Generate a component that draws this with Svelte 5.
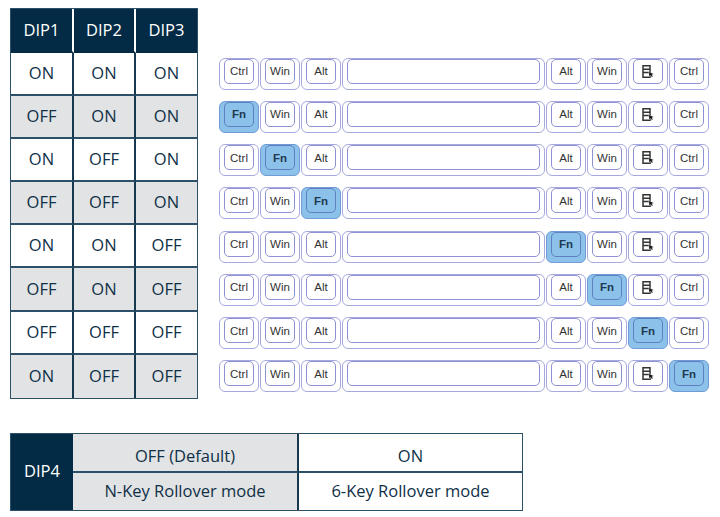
<script>
	const rows = [
		['ON', 'ON', 'ON', -1],
		['OFF', 'ON', 'ON', 0],
		['ON', 'OFF', 'ON', 1],
		['OFF', 'OFF', 'ON', 2],
		['ON', 'ON', 'OFF', 4],
		['OFF', 'ON', 'OFF', 5],
		['OFF', 'OFF', 'OFF', 6],
		['ON', 'OFF', 'OFF', 7]
	];
	const keys = ['Ctrl', 'Win', 'Alt', '', 'Alt', 'Win', 'menu', 'Ctrl'];
</script>

<div class="page">
	<div class="top">
		<div class="dips">
			<div class="cell head">DIP1</div>
			<div class="cell head">DIP2</div>
			<div class="cell head">DIP3</div>
			{#each rows as row, r}
				{#each row.slice(0, 3) as val}
					<div class="cell" class:grey={r % 2 == 1}>{val}</div>
				{/each}
			{/each}
		</div>

		<div class="boards">
			{#each rows as row}
				<div class="board">
					{#each keys as key, i}
						<div class="key" class:space={i == 3} class:fn={row[3] == i}>
							<div class="cap">
								{#if row[3] == i}
									<b>Fn</b>
								{:else if key == 'menu'}
									<svg width="12" height="13" viewBox="0 0 12 13">
										<path d="M1 .8h7v11.4H1z M1 4.2h7 M1 7.6h7" fill="none" stroke="#333" stroke-width="1.5" />
										<path d="M6.6 6.4l5.2 2.6-1.8.8 1 1.7-1.2.7-1-1.7-1.6 1.2z" fill="#111" stroke="#fff" stroke-width=".4" />
									</svg>
								{:else}
									{key}
								{/if}
							</div>
						</div>
					{/each}
				</div>
			{/each}
		</div>
	</div>

	<div class="dip4">
		<div class="cell head side">DIP4</div>
		<div class="cell grey upper">OFF (Default)</div>
		<div class="cell upper">ON</div>
		<div class="cell grey lower">N-Key Rollover mode</div>
		<div class="cell lower">6-Key Rollover mode</div>
	</div>
</div>

<style>
	:global(body) {
		background: #fff;
	}
	.page {
		width: 720px;
		height: 517px;
		padding: 8px 0 0 10px;
		box-sizing: border-box;
		font-family: "Open Sans", sans-serif;
		color: #0f3047;
		overflow: hidden;
	}
	.top {
		display: flex;
		align-items: flex-start;
		gap: 21px;
	}
	.dips {
		display: grid;
		grid-template-columns: 63px 62px 61px;
		grid-template-rows: 44px repeat(8, 43.1px);
		width: 188px;
		border: 1px solid #2c5068;
		box-sizing: border-box;
	}
	.cell {
		display: flex;
		align-items: center;
		justify-content: center;
		font-size: 16.5px;
		border-right: 2px solid #17394f;
		border-bottom: 2px solid #2c5068;
		box-sizing: border-box;
		background: #fff;
	}
	.dips .cell {
		padding-bottom: 2px;
	}
	.dips .cell:nth-child(3n) {
		border-right: 0;
	}
	.dips .cell:nth-last-child(-n+3) {
		border-bottom: 0;
	}
	.head {
		background: #032b45;
		color: #fff;
		border-right-color: #fff;
		border-bottom-color: #032b45;
	}
	.grey {
		background: #e2e3e4;
	}
	.boards {
		display: flex;
		flex-direction: column;
		gap: 11.25px;
		padding-top: 49.5px;
	}
	.board {
		display: flex;
		gap: 1px;
		height: 32px;
	}
	.key {
		width: 40px;
		height: 32px;
		box-sizing: border-box;
		border: 1px solid #a6a9de;
		border-radius: 6px;
		padding: 0 4px 5px;
		background: #fff;
	}
	.key.space {
		width: 203px;
	}
	.cap {
		height: 100%;
		display: flex;
		align-items: center;
		justify-content: center;
		box-sizing: border-box;
		border: 1px solid #8f92d2;
		border-radius: 5px;
		font-family: "Liberation Sans", sans-serif;
		font-size: 11.5px;
		color: #333;
		background: #fff;
	}
	.key.fn {
		background: #8cc1ea;
		border-color: #6f9cd8;
	}
	.fn .cap {
		background: #8cc1ea;
		border-color: #5f80c0;
		color: #1d3a4f;
	}
	.dip4 {
		display: grid;
		grid-template-columns: 62px 226px 223px;
		grid-template-rows: 39px 37px;
		width: 513px;
		height: 78px;
		margin-top: 34px;
		border: 1px solid #2c5068;
		box-sizing: border-box;
	}
	.side {
		grid-row: 1 / 3;
		border-right: 0;
		border-bottom: 0;
		padding-bottom: 2px;
	}
	.upper {
		padding-top: 6px;
	}
	.lower {
		padding-bottom: 2px;
	}
	.dip4 .cell:nth-child(3), .dip4 .cell:nth-child(5) {
		border-right: 0;
	}
	.dip4 .cell:nth-child(4), .dip4 .cell:nth-child(5) {
		border-bottom: 0;
	}
</style>
